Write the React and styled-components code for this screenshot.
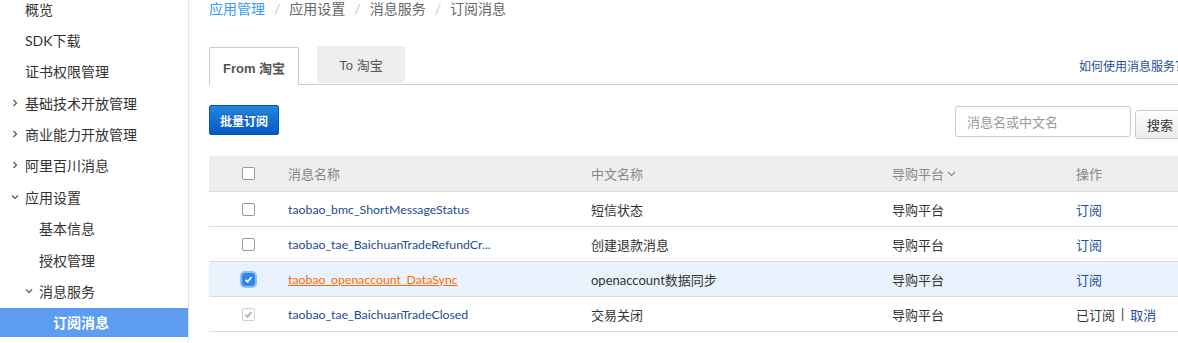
import React from "react";
import styled, { createGlobalStyle, css } from "styled-components";

const GlobalStyle = createGlobalStyle`
  html, body {
    margin: 0;
    padding: 0;
    overflow: hidden;
    background: #fff;
  }
  body {
    font-family: Lato, "Noto Sans CJK SC", sans-serif;
    font-size: 13px;
    color: #333;
  }
`;

const menu = [
  { label: "概览", level: 0 },
  { label: "SDK下载", level: 0 },
  { label: "证书权限管理", level: 0 },
  { label: "基础技术开放管理", level: 0, arrow: "right" },
  { label: "商业能力开放管理", level: 0, arrow: "right" },
  { label: "阿里百川消息", level: 0, arrow: "right" },
  { label: "应用设置", level: 0, arrow: "down" },
  { label: "基本信息", level: 1 },
  { label: "授权管理", level: 1 },
  { label: "消息服务", level: 1, arrow: "down" },
  { label: "订阅消息", level: 2, active: true },
];

const rows = [
  { name: "taobao_bmc_ShortMessageStatus", cn: "短信状态", state: "open" },
  { name: "taobao_tae_BaichuanTradeRefundCr...", cn: "创建退款消息", state: "open" },
  { name: "taobao_openaccount_DataSync", cn: "openaccount数据同步", state: "checked" },
  { name: "taobao_tae_BaichuanTradeClosed", cn: "交易关闭", state: "subscribed" },
  { name: "taobao_tae_BaichuanTradeSuccess", cn: "交易成功", state: "subscribed" },
];

function Chevron({ dir }) {
  return (
    <svg width="8" height="8" viewBox="0 0 8 8">
      {dir === "right" ? (
        <polyline points="2.5,1 5.5,4 2.5,7" fill="none" stroke="#555" strokeWidth="1.2" />
      ) : (
        <polyline points="1,2.5 4,5.5 7,2.5" fill="none" stroke="#555" strokeWidth="1.2" />
      )}
    </svg>
  );
}

function Check({ color }) {
  return (
    <svg width="9" height="9" viewBox="0 0 9 9">
      <polyline points="1.5,4.8 3.6,6.8 7.5,2" fill="none" stroke={color} strokeWidth="1.6" />
    </svg>
  );
}

function Checkbox({ state }) {
  if (state === "checked")
    return (
      <Box $variant="checked">
        <Check color="#fff" />
      </Box>
    );
  if (state === "subscribed")
    return (
      <Box $variant="disabled">
        <Check color="#aaa" />
      </Box>
    );
  return <Box />;
}

export default function App() {
  return (
    <>
      <GlobalStyle />
      <Layout>
        <Sidebar>
          {menu.map((m) => (
            <MenuItem key={m.label} $level={m.level} $active={m.active}>
              <ArrowSlot>{m.arrow && <Chevron dir={m.arrow} />}</ArrowSlot>
              {m.label}
            </MenuItem>
          ))}
        </Sidebar>
        <Main>
          <Breadcrumb>
            <Crumb $link>应用管理</Crumb>
            <Sep>/</Sep>
            <Crumb>应用设置</Crumb>
            <Sep>/</Sep>
            <Crumb>消息服务</Crumb>
            <Sep>/</Sep>
            <Crumb>订阅消息</Crumb>
          </Breadcrumb>
          <TabBar>
            <Tab $active>From 淘宝</Tab>
            <Tab>To 淘宝</Tab>
            <HelpLink>如何使用消息服务？</HelpLink>
          </TabBar>
          <Toolbar>
            <PrimaryButton>批量订阅</PrimaryButton>
            <SearchInput placeholder="消息名或中文名" />
            <SearchButton>搜索</SearchButton>
          </Toolbar>
          <Table>
            <HeadRow>
              <CheckCell>
                <Checkbox />
              </CheckCell>
              <Cell>消息名称</Cell>
              <Cell>中文名称</Cell>
              <Cell>
                导购平台
                <SortIcon viewBox="0 0 9 6" width="9" height="6">
                  <polyline points="1,1 4.5,4.5 8,1" fill="none" stroke="#888" strokeWidth="1.1" />
                </SortIcon>
              </Cell>
              <Cell>操作</Cell>
            </HeadRow>
            {rows.map((r) => (
              <Row key={r.name} $selected={r.state === "checked"}>
                <CheckCell>
                  <Checkbox state={r.state} />
                </CheckCell>
                <Cell>
                  <NameLink $hot={r.state === "checked"}>{r.name}</NameLink>
                </Cell>
                <Cell $dark>{r.cn}</Cell>
                <Cell $dark>导购平台</Cell>
                <Cell $dark>
                  {r.state === "subscribed" ? (
                    <>
                      已订阅<Pipe>|</Pipe>
                      <ActionLink>取消</ActionLink>
                    </>
                  ) : (
                    <ActionLink>订阅</ActionLink>
                  )}
                </Cell>
              </Row>
            ))}
          </Table>
        </Main>
      </Layout>
    </>
  );
}

const Layout = styled.div`
  display: flex;
  margin-top: -6px;
  height: 360px;
`;

const Sidebar = styled.nav`
  width: 188px;
  flex-shrink: 0;
  border-right: 1px solid #e4e4e4;
  display: flex;
  flex-direction: column;
  gap: 2.4px;
`;

const MenuItem = styled.div`
  display: flex;
  align-items: center;
  height: 29px;
  font-size: 14px;
  color: #333;
  padding-left: ${(p) => 8 + p.$level * 14}px;
  ${(p) =>
    p.$active &&
    css`
      background: #5c9df2;
      color: #fff;
      font-weight: bold;
    `}
`;

const ArrowSlot = styled.span`
  width: 17px;
  display: flex;
  align-items: center;
  padding-left: 3px;
  box-sizing: border-box;
`;

const Main = styled.main`
  padding-left: 20px;
  width: 980px;
  flex-shrink: 0;
`;

const Breadcrumb = styled.div`
  display: flex;
  align-items: center;
  height: 28px;
  font-size: 14px;
`;

const Crumb = styled.span`
  color: ${(p) => (p.$link ? "#3d9af2" : "#666")};
`;

const Sep = styled.span`
  color: #c8c8c8;
  margin: 0 9px;
`;

const TabBar = styled.div`
  display: flex;
  align-items: flex-end;
  gap: 18px;
  margin-top: 25px;
  height: 37px;
  border-bottom: 1px solid #cccccc;
`;

const Tab = styled.div`
  display: flex;
  align-items: center;
  justify-content: center;
  box-sizing: border-box;
  font-family: "Liberation Sans", "Noto Sans CJK SC", sans-serif;
  font-size: 13px;
  color: #555;
  ${(p) =>
    p.$active
      ? css`
          width: 90px;
          height: 38px;
          margin-bottom: -1px;
          padding-top: 1px;
          background: #fff;
          border: 1px solid #cccccc;
          border-bottom: none;
          border-radius: 2px 2px 0 0;
          font-weight: bold;
        `
      : css`
          width: 88px;
          height: 37px;
          margin-bottom: 1px;
          background: #eeeeee;
          border-radius: 3px;
        `}
`;

const HelpLink = styled.a`
  margin-left: auto;
  align-self: center;
  font-family: "Noto Sans CJK SC", sans-serif;
  font-size: 12px;
  color: #1f4e95;
  white-space: nowrap;
  margin-right: 2px;
`;

const Toolbar = styled.div`
  display: flex;
  align-items: flex-start;
  margin-top: 20px;
`;

const PrimaryButton = styled.button`
  width: 70px;
  height: 30px;
  border: 1px solid #0656b4;
  border-radius: 2px;
  background: linear-gradient(#2487de, #0358c1);
  color: #fff;
  font-family: "Noto Sans CJK SC", sans-serif;
  font-size: 12px;
  font-weight: bold;
  text-shadow: 0 -1px 0 rgba(0, 0, 0, 0.25);
  padding: 0;
`;

const SearchInput = styled.input`
  margin-left: auto;
  margin-top: 1px;
  width: 176px;
  height: 31px;
  box-sizing: border-box;
  border: 1px solid #cccccc;
  border-radius: 3px;
  padding: 0 11px;
  font-family: "Noto Sans CJK SC", sans-serif;
  font-size: 13px;
  outline: none;
  &::placeholder {
    color: #999;
  }
`;

const SearchButton = styled.button`
  margin-left: 4px;
  margin-right: 2px;
  margin-top: 5px;
  width: 52px;
  height: 29px;
  border: 1px solid #c9c9c9;
  border-radius: 3px;
  background: linear-gradient(#ffffff, #ebebeb);
  color: #333;
  font-family: "Noto Sans CJK SC", sans-serif;
  font-size: 13px;
  text-align: left;
  padding: 0 0 0 11px;
`;

const Table = styled.div`
  margin-top: 17px;
`;

const gridCols = css`
  display: grid;
  grid-template-columns: 79px 303px 301px 184px 1fr;
  align-items: center;
  border-bottom: 1px solid #d7dce3;
`;

const HeadRow = styled.div`
  ${gridCols};
  height: 35px;
  background: #eeeeee;
  color: #888;
`;

const Row = styled.div`
  ${gridCols};
  height: 34px;
  background: ${(p) => (p.$selected ? "#eaf3fd" : "#fff")};
`;

const Cell = styled.div`
  display: flex;
  align-items: center;
  white-space: nowrap;
  color: ${(p) => (p.$dark ? "#333" : "inherit")};
`;

const CheckCell = styled.div`
  display: flex;
  justify-content: center;
  align-items: center;
`;

const Box = styled.span`
  width: 13px;
  height: 13px;
  box-sizing: border-box;
  border-radius: 2px;
  display: flex;
  align-items: center;
  justify-content: center;
  border: 1px solid #9a9a9a;
  background: #fff;
  ${(p) =>
    p.$variant === "checked" &&
    css`
      border-color: #2f86ec;
      background: #2f86ec;
      box-shadow: 0 0 0 2px #8ec0f8;
      border-radius: 3px;
    `}
  ${(p) =>
    p.$variant === "disabled" &&
    css`
      border-color: #cfcfcf;
    `}
`;

const NameLink = styled.a`
  font-size: 12.3px;
  color: ${(p) => (p.$hot ? "#ff6a00" : "#1d4c8f")};
  text-decoration: ${(p) => (p.$hot ? "underline" : "none")};
`;

const ActionLink = styled.a`
  color: #22519b;
`;

const Pipe = styled.span`
  color: #333;
  margin: 0 6px;
`;

const SortIcon = styled.svg`
  margin-left: 3px;
`;
